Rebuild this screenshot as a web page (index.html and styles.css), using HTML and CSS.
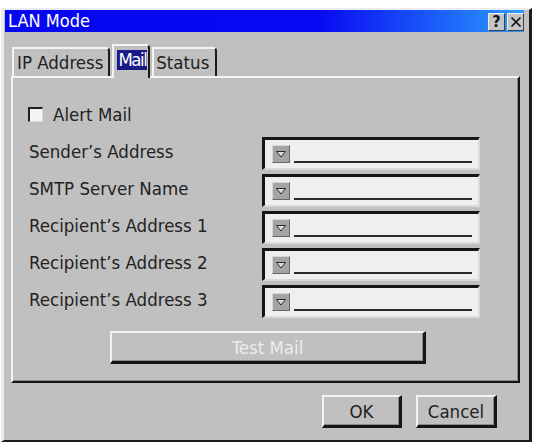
FILE: index.html
```html
<!DOCTYPE html>
<html>
<head>
<meta charset="utf-8">
<link rel="stylesheet" href="styles.css">
</head>
<body>
<div class="window">
  <div class="titlebar">
    <span class="title">LAN Mode</span>
    <div class="tbtns">
      <span class="tbtn help">?</span>
      <span class="tbtn close"><svg width="12" height="12" viewBox="0 0 12 12"><path d="M1.5 1.5 L10.5 10.5 M10.5 1.5 L1.5 10.5" stroke="#111" stroke-width="1.7" fill="none"/></svg></span>
    </div>
  </div>
  <div class="content">
    <div class="tabs">
      <div class="tab ip">IP Address</div>
      <div class="tab active"><span class="sel">Mail</span></div>
      <div class="tab status">Status</div>
    </div>
    <div class="panel">
      <div class="checkrow">
        <span class="checkbox"></span>
        <span class="text">Alert Mail</span>
      </div>
      <div class="fields">
        <div class="row"><span class="label">Sender’s Address</span><div class="box"><span class="dd"><svg width="16" height="16" viewBox="0 0 16 16"><path d="M3.5 5.5 H12.5 L8 11 Z" fill="#dcdcdc" stroke="#2a2a2a" stroke-width="1"/></svg></span><span class="line"></span></div></div>
        <div class="row"><span class="label">SMTP Server Name</span><div class="box"><span class="dd"><svg width="16" height="16" viewBox="0 0 16 16"><path d="M3.5 5.5 H12.5 L8 11 Z" fill="#dcdcdc" stroke="#2a2a2a" stroke-width="1"/></svg></span><span class="line"></span></div></div>
        <div class="row"><span class="label">Recipient’s Address 1</span><div class="box"><span class="dd"><svg width="16" height="16" viewBox="0 0 16 16"><path d="M3.5 5.5 H12.5 L8 11 Z" fill="#dcdcdc" stroke="#2a2a2a" stroke-width="1"/></svg></span><span class="line"></span></div></div>
        <div class="row"><span class="label">Recipient’s Address 2</span><div class="box"><span class="dd"><svg width="16" height="16" viewBox="0 0 16 16"><path d="M3.5 5.5 H12.5 L8 11 Z" fill="#dcdcdc" stroke="#2a2a2a" stroke-width="1"/></svg></span><span class="line"></span></div></div>
        <div class="row"><span class="label">Recipient’s Address 3</span><div class="box"><span class="dd"><svg width="16" height="16" viewBox="0 0 16 16"><path d="M3.5 5.5 H12.5 L8 11 Z" fill="#dcdcdc" stroke="#2a2a2a" stroke-width="1"/></svg></span><span class="line"></span></div></div>
      </div>
      <div class="btn testmail">Test Mail</div>
    </div>
    <div class="footer">
      <div class="btn ok">OK</div>
      <div class="btn cancel">Cancel</div>
    </div>
  </div>
</div>
</body>
</html>
```

FILE: styles.css
```css
html, body {
  margin: 0;
  padding: 0;
  background: #ffffff;
}

body {
  font-family: "DejaVu Sans Condensed", "DejaVu Sans", sans-serif;
  font-stretch: condensed;
  font-size: 18.5px;
  color: #222222;
}

.window {
  margin: 8px 0 0 1px;
  width: 531px;
  height: 434px;
  box-sizing: border-box;
  border-style: solid;
  border-width: 2px 3px 2px 3px;
  border-color: #ececec #1c1c1c #1c1c1c #ececec;
  background: #c0c0c0;
  padding: 0 5px 0 1px;
  display: flex;
  flex-direction: column;
}

.titlebar {
  height: 22px;
  flex: none;
  display: flex;
  align-items: center;
  justify-content: space-between;
  background: linear-gradient(to right, #0606f0 0%, #0808f2 60%, #2a9cff 100%);
  padding-left: 3px;
}

.title {
  color: #ffffff;
  font-size: 18px;
  line-height: 22px;
}

.tbtns {
  display: flex;
  gap: 2px;
  align-self: flex-start;
  margin-top: 3px;
}

.tbtn {
  width: 17px;
  height: 18px;
  box-sizing: border-box;
  background: #c4c4c4;
  border-style: solid;
  border-width: 1px;
  border-color: #eeeeee #404040 #404040 #eeeeee;
  display: flex;
  align-items: center;
  justify-content: center;
  color: #111;
}

.help {
  font-family: "DejaVu Sans", sans-serif;
  font-weight: bold;
  font-size: 16px;
  line-height: 16px;
}

.content {
  flex: 1;
  display: flex;
  flex-direction: column;
  padding: 12px 4px 0 6px;
}

.tabs {
  display: flex;
  align-items: flex-end;
  gap: 2px;
  height: 32px;
  padding-left: 1px;
  position: relative;
  z-index: 1;
}

.tab {
  height: 29px;
  box-sizing: border-box;
  border-style: solid;
  border-width: 2px 2px 0 2px;
  border-color: #f4f4f4 #1c1c1c #f4f4f4 #f4f4f4;
  border-top-right-radius: 4px;
  padding: 0 2px 0 3px;
  display: flex;
  align-items: center;
  line-height: 22px;
}

.tab.ip {
  padding-right: 5px;
}

.tab.status {
  padding: 0 6px 0 2px;
}

.tab.active {
  height: 34px;
  margin-bottom: -2px;
  background: #c0c0c0;
  padding: 0 1px 4px 3px;
}

.sel {
  background: #1a1a86;
  color: #ffffff;
  padding: 0 1px;
  letter-spacing: -1.5px;
  line-height: 20px;
}

.panel {
  height: 307px;
  box-sizing: border-box;
  border-style: solid;
  border-width: 2px;
  border-color: #f4f4f4 #161616 #161616 #f4f4f4;
  box-shadow: inset -1px -1px 0 #8a8a8a;
  padding: 28px 0 0 15px;
  display: flex;
  flex-direction: column;
}

.checkrow {
  display: flex;
  align-items: center;
  height: 16px;
  gap: 10px;
}

.checkbox {
  width: 15px;
  height: 15px;
  box-sizing: border-box;
  background: #f4f4f4;
  border-style: solid;
  border-width: 2px 1px 1px 2px;
  border-color: #202020 #d8d8d8 #d8d8d8 #202020;
}

.fields {
  display: flex;
  flex-direction: column;
  gap: 4px;
  margin-top: 15px;
}

.row {
  display: grid;
  grid-template-columns: 234px 218px;
  align-items: center;
  height: 33px;
}

.label {
  padding-left: 1px;
  padding-bottom: 5px;
  white-space: nowrap;
}

.box {
  height: 33px;
  box-sizing: border-box;
  border-style: solid;
  border-width: 3px 2px 2px 3px;
  border-color: #161616 #dadada #dadada #161616;
  background: #efefef;
  display: flex;
  align-items: flex-end;
  padding: 0 0 5px 7px;
}

.dd {
  width: 18px;
  height: 18px;
  box-sizing: border-box;
  background: #a4a4a4;
  border-style: solid;
  border-width: 1px;
  border-color: #d6d6d6 #666666 #666666 #d6d6d6;
  display: flex;
  align-items: center;
  justify-content: center;
  overflow: hidden;
}

.dd svg {
  flex: none;
}

.line {
  width: 178px;
  height: 2px;
  margin-left: 4px;
  background: #2a2a2a;
}

.btn {
  height: 33px;
  box-sizing: border-box;
  border-style: solid;
  border-width: 2px 3px 3px 2px;
  border-color: #f2f2f2 #161616 #161616 #f2f2f2;
  box-shadow: inset -1px -1px 0 #8a8a8a;
  display: flex;
  align-items: center;
  justify-content: center;
  background: #c0c0c0;
}

.testmail {
  width: 316px;
  margin: 13px 0 0 82px;
  color: #ececec;
}

.footer {
  display: flex;
  justify-content: flex-end;
  gap: 14px;
  margin-top: 12px;
  padding-right: 23px;
}

.ok {
  width: 80px;
}

.cancel {
  width: 81px;
}
```
